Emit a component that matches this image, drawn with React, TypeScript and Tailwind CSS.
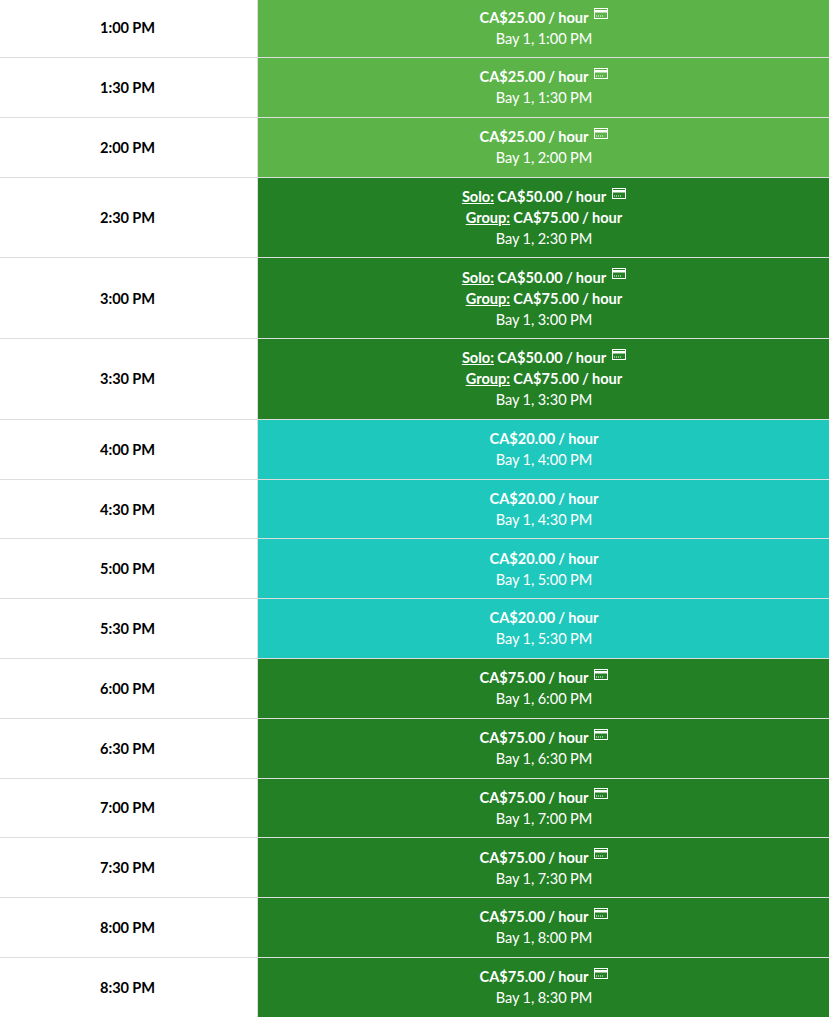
import React from "react";

type Slot = {
  time: string;
  kind: "light" | "dark" | "teal" | "split";
  price?: string;
};

const slots: Slot[] = [
  { time: "1:00 PM", kind: "light", price: "CA$25.00" },
  { time: "1:30 PM", kind: "light", price: "CA$25.00" },
  { time: "2:00 PM", kind: "light", price: "CA$25.00" },
  { time: "2:30 PM", kind: "split" },
  { time: "3:00 PM", kind: "split" },
  { time: "3:30 PM", kind: "split" },
  { time: "4:00 PM", kind: "teal", price: "CA$20.00" },
  { time: "4:30 PM", kind: "teal", price: "CA$20.00" },
  { time: "5:00 PM", kind: "teal", price: "CA$20.00" },
  { time: "5:30 PM", kind: "teal", price: "CA$20.00" },
  { time: "6:00 PM", kind: "dark", price: "CA$75.00" },
  { time: "6:30 PM", kind: "dark", price: "CA$75.00" },
  { time: "7:00 PM", kind: "dark", price: "CA$75.00" },
  { time: "7:30 PM", kind: "dark", price: "CA$75.00" },
  { time: "8:00 PM", kind: "dark", price: "CA$75.00" },
  { time: "8:30 PM", kind: "dark", price: "CA$75.00" },
];

const CardIcon = () => (
  <svg width="14" height="11" viewBox="0 0 14 11" className="inline-block ml-[6px] align-[3.4px]">
    <rect x="0.5" y="0.5" width="13" height="10" fill="none" stroke="#fff" strokeWidth="1" />
    <rect x="0" y="2" width="14" height="2.5" fill="#fff" />
    <rect x="2" y="7.5" width="1" height="1" fill="#fff" />
    <rect x="4" y="7.5" width="1" height="1" fill="#fff" />
    <rect x="6" y="7.5" width="1" height="1" fill="#fff" />
    <rect x="8" y="7.5" width="1" height="1" fill="#fff" />
  </svg>
);

const bg = {
  light: "bg-[#5cb449]",
  dark: "bg-[#238024]",
  split: "bg-[#238024]",
  teal: "bg-[#1ec8bd]",
};

const SlotRow = ({ slot }: { slot: Slot }) => (
  <div className={`flex border-b border-[#dddddd] ${slot.kind === "split" ? "h-[80.7px]" : "h-[59.8px]"}`}>
    <div className="w-[258px] shrink-0 flex items-center justify-center pt-[2px] pr-[2px] font-bold text-black border-r border-[#dddddd]">
      {slot.time}
    </div>
    <div className={`flex-1 flex flex-col justify-center items-center pt-[1.7px] pl-[1px] text-white ${bg[slot.kind]}`}>
      {slot.kind === "split" ? (
        <>
          <div className="font-bold">
            <span className="underline">Solo:</span> CA$50.00 / hour
            <CardIcon />
          </div>
          <div className="font-bold">
            <span className="underline">Group:</span> CA$75.00 / hour
          </div>
        </>
      ) : (
        <div className="font-bold">
          {slot.price} / hour
          {slot.kind !== "teal" && <CardIcon />}
        </div>
      )}
      <div>Bay 1, {slot.time}</div>
    </div>
  </div>
);

export default function App() {
  return (
    <div className="h-[1017px] overflow-hidden bg-white">
      <div className="-mt-[1.7px] font-['Lato',sans-serif] text-[14.6px] leading-[20.9px] [word-spacing:-0.4px]">
        {slots.map((slot) => (
          <SlotRow key={slot.time} slot={slot} />
        ))}
      </div>
    </div>
  );
}
